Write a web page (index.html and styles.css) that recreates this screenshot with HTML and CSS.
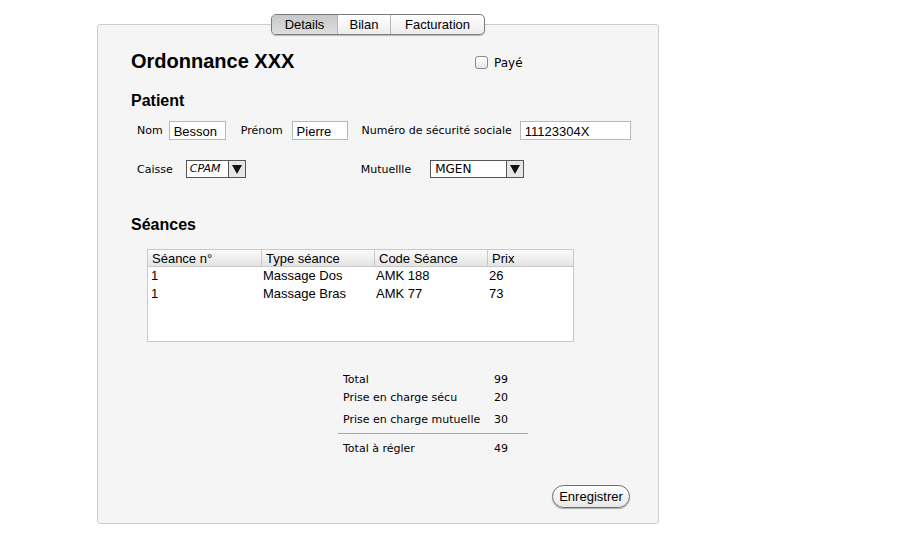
FILE: index.html
```html
<!DOCTYPE html>
<html lang="fr">
<head>
<meta charset="utf-8">
<title>Ordonnance</title>
<link rel="stylesheet" href="styles.css">
</head>
<body>
<div class="wrap">
  <div class="tabs">
    <div class="tab active">Details</div>
    <div class="tab">Bilan</div>
    <div class="tab">Facturation</div>
  </div>
  <div class="panel">
    <div class="head">
      <h1 class="title">Ordonnance XXX</h1>
      <label class="paye"><span class="check"></span>Payé</label>
    </div>
    <h2 class="section">Patient</h2>
    <div class="row row1">
      <span class="lbl">Nom</span><span class="field f-nom">Besson</span>
      <span class="lbl l-prenom">Prénom</span><span class="field f-prenom">Pierre</span>
      <span class="lbl l-secu">Numéro de sécurité sociale</span><span class="field f-secu">11123304X</span>
    </div>
    <div class="row row2">
      <span class="lbl">Caisse</span>
      <span class="select s-caisse"><span class="sval">CPAM</span><span class="arrow"></span></span>
      <span class="lbl l-mut">Mutuellle</span>
      <span class="select s-mut"><span class="sval">MGEN</span><span class="arrow"></span></span>
    </div>
    <h2 class="section seances">Séances</h2>
    <div class="table">
      <div class="thead">
        <span>Séance n°</span><span>Type séance</span><span>Code Séance</span><span>Prix</span>
      </div>
      <div class="trow"><span>1</span><span>Massage Dos</span><span>AMK 188</span><span>26</span></div>
      <div class="trow"><span>1</span><span>Massage Bras</span><span>AMK 77</span><span>73</span></div>
    </div>
    <div class="totals">
      <div class="tot t1"><span>Total</span><span>99</span></div>
      <div class="tot t2"><span>Prise en charge sécu</span><span>20</span></div>
      <div class="tot t3"><span>Prise en charge mutuelle</span><span>30</span></div>
      <div class="tot t4"><span>Total à régler</span><span>49</span></div>
    </div>
    <div class="actions">
      <button class="btn">Enregistrer</button>
    </div>
  </div>
</div>
</body>
</html>
```

FILE: styles.css
```css
html, body { margin: 0; padding: 0; background: #fff; }
body { font-family: "Liberation Sans", Arial, sans-serif; color: #000; }
.wrap { width: 562px; margin-left: 97px; padding-top: 14px; position: relative; }
.tabs {
  display: flex; margin-left: 174px; width: 214px;
  border: 1px solid #7b7b7b; border-radius: 5px; overflow: hidden;
  background: linear-gradient(#ffffff, #ececec);
  position: relative; z-index: 2; box-sizing: border-box; height: 21px;
  box-shadow: 0 1px 1px rgba(0,0,0,0.25);
}
.tab { font-size: 13px; line-height: 19px; text-align: center; border-left: 1px solid #b5b5b5; }
.tab:first-child { border-left: none; width: 65px; }
.tab:nth-child(2) { width: 52px; }
.tab:nth-child(3) { flex: 1; }
.tab.active { background: linear-gradient(#c8c8c8, #dedede); }
.panel {
  margin-top: -11px; height: 500px; box-sizing: border-box;
  background: #f5f5f5; border: 1px solid #cccccc; border-radius: 3px;
  padding: 24px 0 0 33px; position: relative;
}
.head { display: flex; align-items: center; height: 26px; margin-top: -1px; }
.title { font-size: 20px; font-weight: bold; margin: 0; width: 344px; }
.paye { display: flex; align-items: center; font-size: 12px; font-family: "DejaVu Sans", sans-serif; margin-top: 3px; }
.check {
  border: 1px solid #8a8a8a; border-radius: 3px; margin-right: 6px;
  background: linear-gradient(#fff, #e6e6e6); box-sizing: border-box; width: 13px; height: 13px;
}
.section { font-size: 16px; font-weight: bold; margin: 18px 0 0 0; line-height: 18px; }
.lbl { font-family: "DejaVu Sans", sans-serif; font-size: 11px; }
.row { display: flex; align-items: center; padding-left: 6px; }
.row1 { margin-top: 11px; height: 19px; }
.field {
  background: #fff; border: 1px solid #b8b8b8; box-sizing: border-box; height: 19px;
  font-size: 13px; line-height: 19px; padding-left: 4px; margin-left: 6px;
}
.f-nom { width: 57px; }
.l-prenom { margin-left: 15px; }
.f-prenom { width: 56px; margin-left: 9px; }
.l-secu { margin-left: 14px; }
.f-secu { width: 111px; margin-left: 8px; }
.row2 { margin-top: 20px; height: 18px; }
.select {
  display: flex; background: #fff; border: 1px solid #555; height: 18px; box-sizing: border-box;
}
.sval { font-family: "DejaVu Sans", sans-serif; font-size: 12px; line-height: 16px; padding-left: 4px; flex: 1; }
.s-caisse { width: 60px; margin-left: 13px; }
.s-caisse .sval { font-style: italic; font-size: 11px; padding-left: 3px; }
.s-mut { width: 94px; margin-left: 19px; }
.l-mut { margin-left: 115px; }
.arrow {
  width: 16px; border-left: 1px solid #555; background: #e6e6e6; position: relative;
}
.arrow::after {
  content: ""; position: absolute; left: 3px; top: 4px;
  border-left: 5px solid transparent; border-right: 5px solid transparent; border-top: 9px solid #111;
}
.seances { margin-top: 38px; }
.table {
  margin: 15px 0 0 16px; width: 427px; height: 93px; box-sizing: border-box;
  background: #fff; border: 1px solid #c8c8c8; font-size: 13px;
}
.thead {
  display: grid; grid-template-columns: 113px 113px 113px 1fr; height: 16px;
  background: linear-gradient(#fafafa, #e4e4e4); border-bottom: 1px solid #c8c8c8;
  line-height: 17px;
}
.thead span { padding-left: 4px; border-left: 1px solid #c8c8c8; }
.thead span:first-child { border-left: none; }
.trow { display: grid; grid-template-columns: 113px 113px 113px 1fr; line-height: 18px; }
.trow span { padding-left: 3px; }
.trow span:nth-child(2), .trow span:nth-child(3) { padding-left: 2px; }
.trow span:nth-child(4) { padding-left: 2px; }
.totals { margin: 29px 0 0 207px; width: 190px; font-family: "DejaVu Sans", sans-serif; font-size: 11px; }
.tot { display: flex; padding-left: 5px; }
.tot span:first-child { width: 151px; }
.t1 { line-height: 18px; }
.t2 { line-height: 18px; }
.t3 { line-height: 18px; margin-top: 4px; padding-bottom: 4px; border-bottom: 1px solid #a8a8a0; }
.t4 { line-height: 18px; margin-top: 6px; }
.actions { display: flex; justify-content: flex-end; padding-right: 28px; margin-top: 27px; }
.btn {
  font-family: "Liberation Sans", Arial, sans-serif; font-size: 13px; color: #000;
  height: 23px; width: 78px; border-radius: 12px; border: 1px solid #6d6d6d;
  background: linear-gradient(#ffffff, #e8e8e8); box-shadow: 0 1px 1px rgba(0,0,0,0.3); padding: 0;
}
```
